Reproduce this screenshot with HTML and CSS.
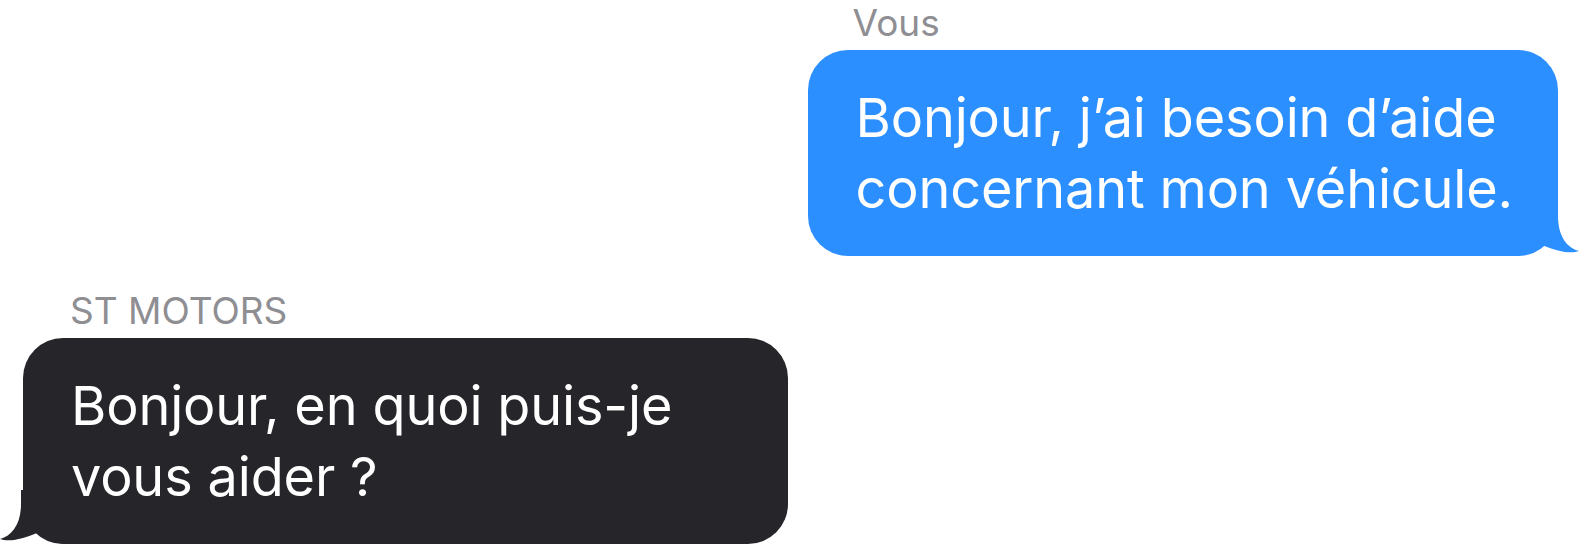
FILE: index.html
```html
<!DOCTYPE html>
<html lang="fr">
<head>
  <meta charset="UTF-8">
  <meta name="viewport" content="width=device-width, initial-scale=1.0">
  <title>Messages</title>
  <link rel="stylesheet" href="styles.css">
</head>
<body>
  <div class="chat">
    <div class="msg msg-me">
      <div class="sender">Vous</div>
      <div class="bubble bubble-me">
        Bonjour, j’ai besoin d’aide<br>concernant mon véhicule.
        <svg class="tail tail-me" viewBox="0 0 64 54" width="64" height="54">
          <path d="M0 53.5 L0 0 L43 0 L43 14 C43 34 52 46 64 49 C56 52 44 50 27 43 C20 48 12 53.5 0 53.5 Z"/>
        </svg>
      </div>
    </div>

    <div class="msg msg-them">
      <div class="sender">ST MOTORS</div>
      <div class="bubble bubble-them">
        Bonjour, en quoi puis-je vous aider ?
        <svg class="tail tail-them" viewBox="0 0 64 54" width="64" height="54">
          <path d="M0 53.5 L0 0 L43 0 L43 14 C43 34 52 46 64 49 C56 52 44 50 27 43 C20 48 12 53.5 0 53.5 Z"/>
        </svg>
      </div>
    </div>
  </div>
</body>
</html>
```

FILE: styles.css
```css
body {
  margin: 0;
  background: #fff;
  font-family: Inter, "Noto Sans", sans-serif;
}
.chat {
  display: flex;
  flex-direction: column;
  gap: 35px;
  padding-top: 3px;
}
.msg {
  display: flex;
  flex-direction: column;
}
.msg-me {
  align-self: flex-end;
  margin-right: 21px;
}
.msg-them {
  align-self: flex-start;
  margin-left: 23px;
}
.sender {
  color: #8e8e93;
  font-size: 37px;
  line-height: 40px;
  padding-left: 45px;
  margin-bottom: 7px;
}
.msg-them .sender {
  padding-left: 47px;
}
.bubble {
  position: relative;
  box-sizing: border-box;
  width: fit-content;
  max-width: 765px;
  padding: 32px 45px 32px 48px;
  border-radius: 40px;
  font-size: 54px;
  line-height: 71px;
  letter-spacing: -0.15px;
  color: #fff;
}
.bubble-me {
  background: #2b8fff;
}
.bubble-them {
  width: 765px;
  background: #26252a;
}
.tail {
  position: absolute;
  bottom: 0;
}
.tail-me {
  right: -21px;
  fill: #2b8fff;
}
.tail-them {
  left: -23px;
  fill: #26252a;
  transform: scaleX(-1);
}
```
